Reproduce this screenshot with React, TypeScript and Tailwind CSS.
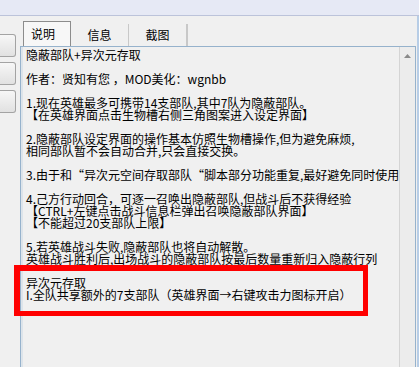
const lines: string[] = [
  "隐蔽部队+异次元存取",
  "",
  "作者：贤知有您 ，MOD美化：wgnbb",
  "",
  "1.现在英雄最多可携带14支部队,其中7队为隐蔽部队。",
  "【在英雄界面点击生物槽右侧三角图案进入设定界面】",
  "",
  "2.隐蔽部队设定界面的操作基本仿照生物槽操作,但为避免麻烦,",
  "相同部队暂不会自动合并,只会直接交换。",
  "",
  "3.由于和\u201c异次元空间存取部队\u201c脚本部分功能重复,最好避免同时使用",
  "",
  "4.己方行动回合，可逐一召唤出隐蔽部队,但战斗后不获得经验",
  "【CTRL+左键点击战斗信息栏弹出召唤隐蔽部队界面】",
  "【不能超过20支部队上限】",
  "",
  "5.若英雄战斗失败,隐蔽部队也将自动解散。",
  "英雄战斗胜利后,出场战斗的隐蔽部队按最后数量重新归入隐蔽行列",
  "",
  "异次元存取",
  "I.全队共享额外的7支部队（英雄界面→右键攻击力图标开启）",
];

const SideButton = () => (
  <div className="h-[23px] w-[16px] rounded-r-[3px] border border-l-0 border-[#a3a3a3] bg-gradient-to-b from-[#f7f7f7] to-[#e1e1e1]" />
);

export default function App() {
  const tabs = ["说明", "信息", "截图"];

  return (
    <div className="relative w-[419px] h-[367px] overflow-hidden bg-[#f0f0f0] text-black text-[12px] font-['Noto_Sans_CJK_SC','Noto_Sans_CJK_JP',sans-serif]">
      <div className="h-[16px] bg-[#e6e9f5] border-b border-[#bcc3da]" />
      <div className="flex">
        {/* left edge buttons */}
        <div className="w-[16px] pt-[18px] flex flex-col gap-[5px]">
          <SideButton />
          <SideButton />
          <SideButton />
        </div>

        <div className="ml-[4px] w-[396px] flex flex-col">
          {/* tab strip */}
          <div className="mt-[5px] h-[25px] flex items-end pl-[3px]">
            {tabs.map((t, i) =>
              i === 0 ? (
                <div
                  key={t}
                  className="h-[25px] w-[48px] border border-b-0 border-[#8c8c8c] bg-[#f7f7f7] flex items-center pl-[7px] leading-none"
                >
                  {t}
                </div>
              ) : (
                <div key={t} className="h-[22px] w-[58px] flex items-center justify-center border-r border-[#c8c8c8] leading-none">
                  {t}
                </div>
              )
            )}
            <div className="h-[22px] w-[3px] border-l border-[#c8c8c8] ml-[0px]" />
          </div>

          {/* text box */}
          <div className="flex h-[330px] border-t border-l border-r border-[#96b2cc] bg-[#f0f0f0]">
            <div className="flex-1 border-l-[2px] border-[#dde4ea] pl-[3px] pt-[2px]">
              {lines.map((l, i) => (
                <div key={i} className="h-[12px] leading-[12px] whitespace-nowrap">
                  {l}
                </div>
              ))}
            </div>
            <div className="w-[18px] border-l border-[#d4d4d4] bg-[#ececec] flex justify-center pt-[7px]">
              <svg width="7" height="4" viewBox="0 0 7 4">
                <path d="M3.5 0 L7 4 L0 4 Z" fill="#8a8a8a" />
              </svg>
            </div>
          </div>
        </div>
        <div className="w-[3px] border-r-[2px] border-[#b7cde6]" />
      </div>

      {/* red annotation box */}
      <div className="absolute left-[14px] top-[265px] w-[354px] h-[51px] border-t-[6px] border-l-[6px] border-r-[5px] border-b-[5px] border-[#ff0000]" />
    </div>
  );
}
